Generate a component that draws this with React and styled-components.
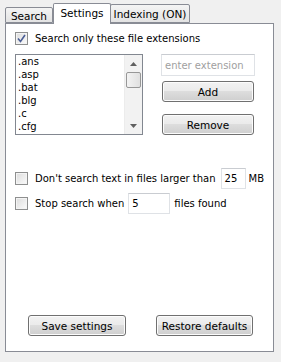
import React from 'react';
import styled, { createGlobalStyle } from 'styled-components';

const GlobalStyle = createGlobalStyle`
  html, body {
    margin: 0;
    padding: 0;
    background: #f0f0f0;
  }
  body {
    font-family: "DejaVu Sans", Verdana, sans-serif;
    font-size: 10px;
    color: #000;
  }
`;

// ウィンドウ全体
const Window = styled.div`
  width: 281px;
  height: 362px;
  box-sizing: border-box;
  padding: 3px 7px 10px 5px;
  display: flex;
  flex-direction: column;
  background: #f0f0f0;
`;

const TabStrip = styled.div`
  display: flex;
  align-items: flex-end;
  height: 20px;
  position: relative;
  z-index: 1;
`;

const Tab = styled.div`
  box-sizing: border-box;
  height: ${(p) => (p.$active ? 21 : p.$h)}px;
  margin-bottom: ${(p) => (p.$active ? -1 : 0)}px;
  margin-left: ${(p) => p.$ml || 0}px;
  padding-top: ${(p) => (p.$active ? 3 : p.$pt || 1)}px;
  border: 1px solid #898c95;
  border-bottom: ${(p) => (p.$active ? 'none' : '1px solid #898c95')};
  border-radius: 2px 2px 0 0;
  background: ${(p) =>
    p.$active ? '#fff' : 'linear-gradient(#f4f4f4, #e3e3e3)'};
  display: flex;
  align-items: flex-start;
  justify-content: center;
  width: ${(p) => p.$w}px;
  font-size: 10.5px;
  line-height: 13px;
  white-space: nowrap;
`;

const Panel = styled.div`
  flex: 1;
  box-sizing: border-box;
  border: 1px solid #898c95;
  background: #fff;
  padding: 6px 0 15px 9px;
  display: flex;
  flex-direction: column;
`;

const CheckRow = styled.label`
  display: flex;
  align-items: center;
  height: ${(p) => p.$h || 16}px;
  margin-top: ${(p) => p.$mt || 0}px;
  white-space: nowrap;
`;

const Box = styled.span`
  box-sizing: border-box;
  width: 13px;
  height: 13px;
  border: 1px solid #8e8f8f;
  background: linear-gradient(135deg, #dcdcdc, #fbfbfb);
  box-shadow: inset 0 0 0 1px #f4f4f4;
  display: flex;
  align-items: center;
  justify-content: center;
  margin-right: 7px;
  flex: none;
`;

const Middle = styled.div`
  display: flex;
  margin-top: 8px;
`;

const ListBox = styled.div`
  box-sizing: border-box;
  width: 128px;
  height: 81px;
  border: 1px solid #828790;
  display: flex;
  background: #fff;
`;

const Items = styled.div`
  flex: 1;
  padding: 0 0 0 2px;
  overflow: hidden;
`;

const Item = styled.div`
  height: 13px;
  line-height: 13px;
`;

const ScrollBar = styled.div`
  width: 17px;
  display: flex;
  flex-direction: column;
  align-items: center;
  background: #f2f2f2;
  border-left: 1px solid #ececec;
`;

const Arrow = styled.div`
  height: 17px;
  display: flex;
  align-items: center;
  justify-content: center;
`;

const Thumb = styled.div`
  box-sizing: border-box;
  width: 15px;
  height: 16px;
  border: 1px solid #979797;
  border-radius: 2px;
  background: linear-gradient(90deg, #f3f3f3, #e0e0e0);
`;

const Spacer = styled.div`
  flex: 1;
`;

const Side = styled.div`
  display: flex;
  flex-direction: column;
  margin-left: 18px;
  width: 94px;
`;

const TextBox = styled.div`
  box-sizing: border-box;
  width: ${(p) => p.$w}px;
  height: ${(p) => p.$h || 21}px;
  border: 1px solid #dfe2e6;
  border-top-color: #c9ccd1;
  padding: 0 3px;
  display: flex;
  align-items: center;
  color: ${(p) => (p.$placeholder ? '#a0a0a0' : '#000')};
  margin: ${(p) => p.$m || '0'};
  flex: none;
`;

const Button = styled.div`
  box-sizing: border-box;
  width: ${(p) => p.$w}px;
  height: ${(p) => p.$h || 21}px;
  margin: ${(p) => p.$m || '0'};
  border: 1px solid #707070;
  border-radius: 3px;
  background: linear-gradient(#f2f2f2 0%, #ebebeb 45%, #dddddd 50%, #cfcfcf 100%);
  box-shadow: inset 0 0 0 1px #fcfcfc;
  display: flex;
  align-items: center;
  justify-content: center;
  font-size: 10.5px;
  white-space: nowrap;
`;

const Footer = styled.div`
  margin-top: auto;
  display: flex;
  padding-left: 13px;
`;

const Gap = styled.span`
  display: inline-block;
  width: ${(p) => p.$w}px;
`;

const exts = ['.ans', '.asp', '.bat', '.blg', '.c', '.cfg'];

function CheckBox({ checked }) {
  return (
    <Box>
      {checked && (
        <svg width="9" height="9" viewBox="0 0 9 9">
          <path d="M1 4.5 L3.5 7.5 L8 1" fill="none" stroke="#4b5e95" strokeWidth="1.6" />
        </svg>
      )}
    </Box>
  );
}

function App() {
  return (
    <>
      <GlobalStyle />
      <Window>
        <TabStrip>
          <Tab $w={48} $h={16} $pt={2}>Search</Tab>
          <Tab $w={58} $active>Settings</Tab>
          <Tab $w={80} $h={19} $ml={-1} $pt={3}>Indexing (ON)</Tab>
        </TabStrip>
        <Panel>
          <CheckRow>
            <CheckBox checked />
            Search only these file extensions
          </CheckRow>
          <Middle>
            <ListBox>
              <Items>
                {exts.map((e) => (
                  <Item key={e}>{e}</Item>
                ))}
              </Items>
              <ScrollBar>
                <Arrow>
                  <svg width="7" height="4" viewBox="0 0 7 4">
                    <path d="M0 4 L3.5 0 L7 4 Z" fill="#606060" />
                  </svg>
                </Arrow>
                <Thumb />
                <Spacer />
                <Arrow>
                  <svg width="7" height="4" viewBox="0 0 7 4">
                    <path d="M0 0 L3.5 4 L7 0 Z" fill="#606060" />
                  </svg>
                </Arrow>
              </ScrollBar>
            </ListBox>
            <Side>
              <TextBox $w={94} $h={22} $placeholder>enter extension</TextBox>
              <Button $w={92} $m="5px 0 0 1px">Add</Button>
              <Button $w={92} $m="12px 0 0 1px">Remove</Button>
            </Side>
          </Middle>
          <CheckRow $h={21} $mt={33}>
            <CheckBox />
            Don't search text in files larger than
            <Gap $w={5} />
            <TextBox $w={25}>25</TextBox>
            <Gap $w={3} />
            MB
          </CheckRow>
          <CheckRow $h={21} $mt={4}>
            <CheckBox />
            Stop search when
            <Gap $w={4} />
            <TextBox $w={42}>5</TextBox>
            <Gap $w={4} />
            files found
          </CheckRow>
          <Footer>
            <Button $w={98}>Save settings</Button>
            <Button $w={97} $m="0 0 0 30px">Restore defaults</Button>
          </Footer>
        </Panel>
      </Window>
    </>
  );
}

export default App;
